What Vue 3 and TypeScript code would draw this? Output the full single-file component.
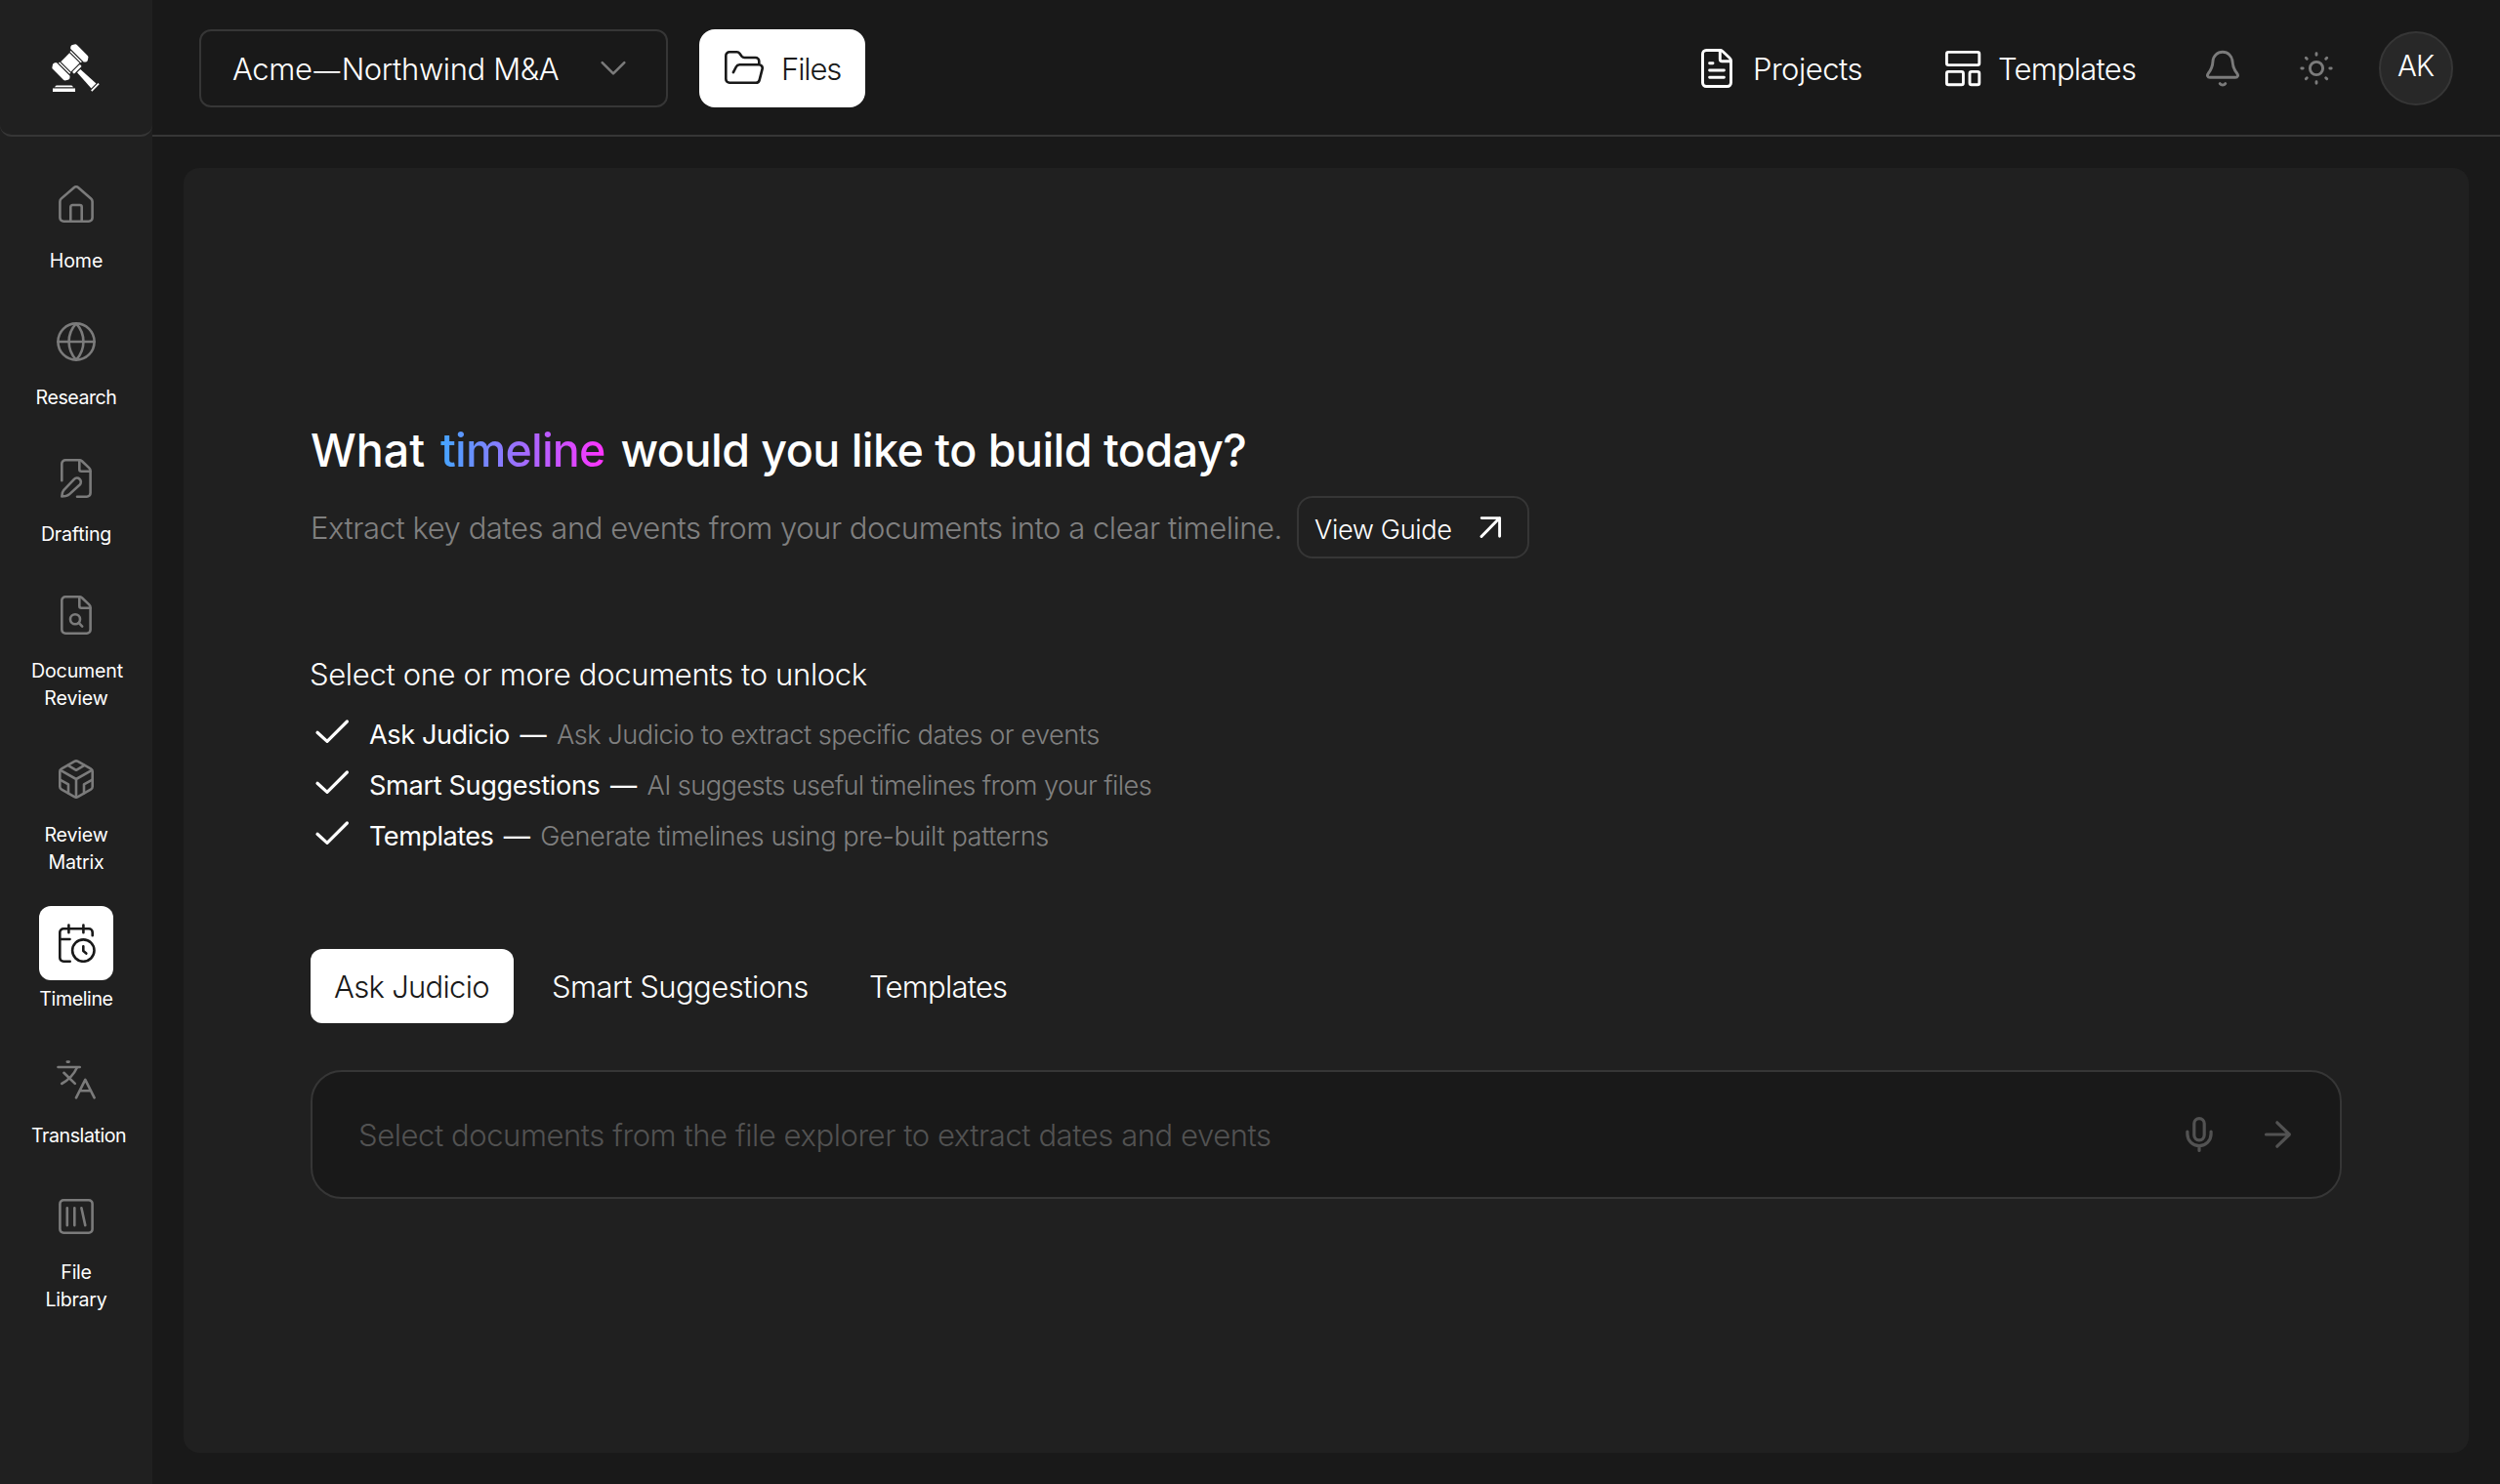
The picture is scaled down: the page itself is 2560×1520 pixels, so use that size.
<script setup lang="ts">
interface NavItem {
  label: string[]
  spacing: number
  active?: boolean
  paths: string[]
}

interface Feature {
  name: string
  text: string
  nameSpacing: number
  textSpacing: number
}

const nav: NavItem[] = [
  {
    label: ['Home'],
    spacing: -0.1,
    paths: [
      'M3.4 16.4c0-1.2.5-2.2 1.4-3L17.7 2.2a3.5 3.5 0 0 1 4.6 0l12.9 11.2c.9.8 1.4 1.8 1.4 3V33a3.7 3.7 0 0 1-3.7 3.7H7.1A3.7 3.7 0 0 1 3.4 33z',
      'M14.3 36.7V22a2 2 0 0 1 2-2h7.4a2 2 0 0 1 2 2v14.7',
    ],
  },
  {
    label: ['Research'],
    spacing: -0.46,
    paths: [
      'M1.4 20a18.6 18.6 0 1 0 37.2 0a18.6 18.6 0 1 0-37.2 0z',
      'M1.4 20h37.2',
      'M20 1.4c-9.9 10.6-9.9 26.6 0 37.2M20 1.4c9.9 10.6 9.9 26.6 0 37.2',
    ],
  },
  {
    label: ['Drafting'],
    spacing: -0.2,
    paths: [
      'M5.3 22.3V5a3.7 3.7 0 0 1 3.7-3.7h14.3c1 0 1.9.4 2.6 1l7.5 7.1c.8.7 1.2 1.7 1.2 2.8V35a3.7 3.7 0 0 1-3.7 3.7H21',
      'M23.3 1.5v9.3a2 2 0 0 0 2 2h9.1',
      'M5.3 38.5c.1-2.8.6-5 1.9-6.4L17.9 20.9a4 4 0 0 1 5.8 5.6L13.2 36.1c-1.8 1.6-4.6 2.3-7.9 2.4z',
    ],
  },
  {
    label: ['Document', 'Review'],
    spacing: -0.15,
    paths: [
      'M5.3 5A3.7 3.7 0 0 1 9 1.3h14.3c1 0 1.9.4 2.6 1l7.5 7.1c.8.7 1.2 1.7 1.2 2.8V35a3.7 3.7 0 0 1-3.7 3.7H9A3.7 3.7 0 0 1 5.3 35z',
      'M23.3 1.5v9.3a2 2 0 0 0 2 2h9.1',
      'M14 24.3a5 5 0 1 0 10 0a5 5 0 1 0-10 0z',
      'M22.6 27.9l3.6 3.7',
    ],
  },
  {
    label: ['Review', 'Matrix'],
    spacing: -0.2,
    paths: [
      'M18.2 1.9a3.6 3.6 0 0 1 3.6 0l13.1 7.4a3.5 3.5 0 0 1 1.8 3.1v15.2a3.5 3.5 0 0 1-1.8 3.1l-13.1 7.4a3.6 3.6 0 0 1-3.6 0L5.1 30.7a3.5 3.5 0 0 1-1.8-3.1V12.4a3.5 3.5 0 0 1 1.8-3.1z',
      'M3.9 10.9L20 20l16.1-9.1M20 20v18.4',
      'M11.6 5.8l8.4 5l8.4-5',
      'M3.4 20.6l8.6 4.8v8.9M36.6 20.6L28 25.4v8.9',
    ],
  },
  {
    label: ['Timeline'],
    spacing: -0.4,
    active: true,
    paths: [
      'M13.7 38.7H7A3.7 3.7 0 0 1 3.3 35V9A3.7 3.7 0 0 1 7 5.3h26A3.7 3.7 0 0 1 36.7 9v3.2',
      'M12.4 1.5v7.8M27.4 1.5v7.8M3.3 16h10.2',
      'M16.1 27.6a11.2 11.2 0 1 0 22.4 0a11.2 11.2 0 1 0-22.4 0z',
      'M27.3 23.2v4.9l3 2.5',
    ],
  },
  {
    label: ['Translation'],
    spacing: -0.45,
    paths: [
      'M10.8 1.6h1.8M1.5 7h22.2',
      'M21 7.3C17.6 14.6 12 20.3 5.2 24M7.4 12.8L18.8 23.9',
      'M20 38.4L29.3 19.8L38.6 38.4M23.5 31.2h11.6',
    ],
  },
  {
    label: ['File', 'Library'],
    spacing: -0.3,
    paths: [
      'M3.4 7A3.7 3.7 0 0 1 7.1 3.3h25.8A3.7 3.7 0 0 1 36.6 7v26a3.7 3.7 0 0 1-3.7 3.7H7.1A3.7 3.7 0 0 1 3.4 33z',
      'M10.8 11.2v17.9M18.3 11.2v17.9M25.4 11.2l3.9 17.9',
    ],
  },
]

const features: Feature[] = [
  { name: 'Ask Judicio', text: 'Ask Judicio to extract specific dates or events', nameSpacing: -0.45, textSpacing: -0.498 },
  { name: 'Smart Suggestions', text: 'AI suggests useful timelines from your files', nameSpacing: -0.38, textSpacing: -0.592 },
  { name: 'Templates', text: 'Generate timelines using pre-built patterns', nameSpacing: -0.57, textSpacing: -0.405 },
]
</script>

<template>
  <div class="app">
    <aside class="sidebar">
      <div class="brand">
        <svg class="gavel" viewBox="0 0 48 48" fill="#fff">
          <g transform="translate(17.9 17.9) rotate(45)">
            <path d="M-9.5-10h19c1.6-1.4 2.4-2.6 1.6-4.2l-1.7-2.6c-.5-.5-1-.7-1.7-.7H-7.7c-.7 0-1.2.2-1.7.7l-1.7 2.6c-.8 1.6 0 2.8 1.6 4.2z" />
            <path d="M-9.5 10h19c1.6 1.4 2.4 2.6 1.6 4.2l-1.7 2.6c-.5.5-1 .7-1.7.7H-7.7c-.7 0-1.2-.2-1.7-.7l-1.7-2.6c-.8-1.6 0-2.8 1.6-4.2z" />
            <rect x="-8" y="-8.9" width="16" height="1.5" />
            <rect x="-8" y="7.4" width="16" height="1.5" />
            <rect x="-7.3" y="-6.3" width="14.6" height="12.6" />
            <rect x="8.4" y="-5.6" width="2.8" height="11.2" rx="1" />
            <path d="M12.4-2.4L34-3.5v7L12.4 2.4z" />
            <rect x="35.2" y="-5.2" width="1.7" height="10.4" />
          </g>
          <path d="M0 44.6h23v3.4H0zM3.6 41.6h15.8l1.8 1.7H1.8z" />
        </svg>
      </div>
      <nav class="nav">
        <a v-for="item in nav" :key="item.label.join(' ')" class="nav-item" :class="{ active: item.active }">
          <span class="nav-icon">
            <svg class="icon" viewBox="0 0 40 40">
              <path v-for="d in item.paths" :key="d" :d="d" />
            </svg>
          </span>
          <span class="nav-label" :style="{ letterSpacing: item.spacing + 'px' }">
            <span v-for="line in item.label" :key="line">{{ line }}</span>
          </span>
        </a>
      </nav>
    </aside>

    <div class="page">
      <header class="header">
        <button class="matter">
          <span class="t name">Acme<span class="dash">—</span>Northwind M&amp;A</span>
          <svg class="icon dim" viewBox="0 0 40 40"><path d="M8.7 14.1L20 25.3L31.3 14.1" /></svg>
        </button>
        <button class="files">
          <svg class="icon" viewBox="0 0 40 40">
            <path d="M8.9 24.2l2.9-5.7a4 4 0 0 1 3.5-2.2h19.9a3.5 3.5 0 0 1 3.4 4.4l-2.9 11.1a3.8 3.8 0 0 1-3.7 2.9H5A3.7 3.7 0 0 1 1.3 31V7A3.7 3.7 0 0 1 5 3.3h7.6c1.2 0 2.1.5 2.8 1.4l2.2 3c.7.9 1.6 1.3 2.7 1.3h11.3a3.7 3.7 0 0 1 3.7 3.7v3.4" />
          </svg>
          <span class="t">Files</span>
        </button>
        <div class="tools">
          <a class="tool projects">
            <svg class="icon bold" viewBox="0 0 40 40">
              <path d="M5.5 5.2a3.7 3.7 0 0 1 3.7-3.7h14.1c1 0 1.9.4 2.6 1l7.4 7c.8.7 1.2 1.7 1.2 2.8v22.5a3.7 3.7 0 0 1-3.7 3.7H9.2a3.7 3.7 0 0 1-3.7-3.7z" />
              <path d="M23.3 1.7v9.1a2 2 0 0 0 2 2h9" />
              <path d="M12.6 14.7h3.4M12.6 22h14.8M12.6 29.3h14.8" />
            </svg>
            <span class="t">Projects</span>
          </a>
          <a class="tool templates">
            <svg class="icon bold" viewBox="0 0 40 40">
              <rect x="3.4" y="3.4" width="33.4" height="13.2" rx="1.8" />
              <rect x="3.4" y="23.4" width="17" height="13.3" rx="1.8" />
              <rect x="27" y="23.4" width="9.8" height="13.3" rx="1.8" />
            </svg>
            <span class="t">Templates</span>
          </a>
          <svg class="icon bold dim bell" viewBox="0 0 40 40">
            <path d="M20 3.2c-5.5 0-9.7 4.1-10 9.5-.3 5.4-1.3 8.4-4.8 12.6-1.5 1.9-.6 4 1.7 4h26.2c2.3 0 3.2-2.1 1.7-4-3.5-4.2-4.5-7.2-4.8-12.6-.3-5.4-4.5-9.5-10-9.5z" />
            <path d="M17.2 35.6c.7.9 1.7 1.4 2.8 1.4s2.1-.5 2.8-1.4" />
          </svg>
          <svg class="icon bold dim sun" viewBox="0 0 40 40">
            <circle cx="20" cy="20" r="6.6" />
            <path d="M20 4.8v1.4M20 33.8v1.4M4.8 20h1.4M33.8 20h1.4M9.3 9.3l1 1M29.7 29.7l1 1M9.3 30.7l1-1M29.7 10.3l1-1" />
          </svg>
          <div class="avatar">AK</div>
        </div>
      </header>

      <main class="panel">
        <h1 class="title">
          <span class="what">What</span>
          <span class="accent">timeline</span>
          <span class="rest">would you like to build today?</span>
        </h1>
        <div class="lead">
          <p class="t">Extract key dates and events from your documents into a clear timeline.</p>
          <button class="guide">
            <span>View Guide</span>
            <svg class="icon bold" viewBox="0 0 40 40"><path d="M11 29.5L29.6 10.6M11.2 10.6h18.4v18.6" /></svg>
          </button>
        </div>

        <p class="unlock t">Select one or more documents to unlock</p>
        <ul class="features">
          <li v-for="f in features" :key="f.name">
            <svg class="icon heavy check" viewBox="0 0 40 40"><path d="M7 18.3l10 9.1L37.4 7" /></svg>
            <span class="f-name" :style="{ letterSpacing: f.nameSpacing + 'px' }">{{ f.name }}</span>
            <span class="f-dash">—</span>
            <span class="f-text" :style="{ letterSpacing: f.textSpacing + 'px' }">{{ f.text }}</span>
          </li>
        </ul>

        <div class="tabs">
          <button class="tab ask selected"><span class="t">Ask Judicio</span></button>
          <button class="tab smart"><span class="t">Smart Suggestions</span></button>
          <button class="tab tpl"><span class="t">Templates</span></button>
        </div>

        <div class="prompt">
          <span class="t placeholder">Select documents from the file explorer to extract dates and events</span>
          <svg class="icon heavy" viewBox="0 0 40 40">
            <rect x="14.8" y="3.6" width="10.4" height="22.2" rx="5.2" />
            <path d="M7.9 17v2.6a12.1 12.1 0 0 0 24.2 0V17M20 31.9v4.6" />
          </svg>
          <svg class="icon heavy" viewBox="0 0 40 40"><path d="M8.5 20h23.8M19.8 7.8L32.4 20L19.8 32.2" /></svg>
        </div>
      </main>
    </div>
  </div>
</template>

<style>
body {
  background: #191919;
}
</style>

<style scoped>
.app {
  display: flex;
  width: 2560px;
  height: 1520px;
  overflow: hidden;
  background: #191919;
  color: #fff;
  font-family: Inter, "Liberation Sans", sans-serif;
  font-weight: 300;
  font-size: 31px;
  line-height: 40px;
}
.app * {
  box-sizing: border-box;
}
button {
  margin: 0;
  padding: 0;
  border: 0;
  background: none;
  color: inherit;
  font: inherit;
}
h1,
p,
ul {
  margin: 0;
  padding: 0;
  list-style: none;
}
.t {
  padding-top: 2px;
  white-space: nowrap;
}
.icon {
  display: block;
  flex: none;
  width: 40px;
  height: 40px;
  fill: none;
  stroke: currentColor;
  stroke-width: 2.6;
  stroke-linecap: round;
  stroke-linejoin: round;
}
.icon.bold {
  stroke-width: 2.9;
}
.icon.heavy {
  stroke-width: 3.2;
}
.icon.dim {
  color: #7b7b7b;
}

/* sidebar */
.sidebar {
  flex: none;
  width: 156px;
  background: #202020;
}
.brand {
  height: 140px;
  padding: 46px 0 0 54px;
  border-bottom: 2px solid #363636;
  border-radius: 0 0 12px 12px;
}
.gavel {
  display: block;
  width: 48px;
  height: 48px;
  overflow: visible;
}
.nav {
  display: flex;
  flex-direction: column;
  align-items: center;
  gap: 31px;
  padding-top: 32px;
}
.nav-item {
  display: flex;
  flex-direction: column;
  align-items: center;
  gap: 5px;
  width: 92px;
}
.nav-icon {
  display: flex;
  align-items: center;
  justify-content: center;
  width: 76px;
  height: 76px;
  border-radius: 12px;
  color: #7b7b7b;
}
.active .nav-icon {
  background: #fff;
  color: #191919;
}
.nav-label {
  width: 92px;
  font-size: 19.6px;
  font-weight: 400;
  line-height: 28px;
  text-align: center;
}
.nav-label span {
  display: block;
}

/* header */
.page {
  flex: 1;
  display: flex;
  flex-direction: column;
}
.header {
  display: flex;
  align-items: center;
  height: 140px;
  padding: 0 48px;
  border-bottom: 2px solid #363636;
}
.matter {
  display: flex;
  align-items: center;
  justify-content: space-between;
  width: 480px;
  height: 80px;
  margin-top: 2px;
  padding: 0 34px 0 32px;
  border: 2px solid #363636;
  border-radius: 12px;
}
.name {
  letter-spacing: -0.36px;
}
.dash {
  display: inline-block;
  width: 30px;
  font-size: 27px;
  line-height: 30px;
  text-align: center;
}
.files {
  display: flex;
  align-items: center;
  gap: 18px;
  width: 170px;
  height: 80px;
  margin: 2px 0 0 32px;
  padding-left: 26px;
  border-radius: 16px;
  background: #fff;
  color: #191919;
  letter-spacing: -1.1px;
}
.tools {
  display: flex;
  align-items: center;
  margin: 2px 0 0 auto;
}
.tool {
  display: flex;
  align-items: center;
}
.projects {
  gap: 17px;
  width: 172px;
  margin-right: 80px;
  letter-spacing: -0.51px;
}
.templates {
  gap: 16px;
  width: 200px;
  margin-right: 66px;
  letter-spacing: -0.78px;
}
.bell {
  margin-right: 56px;
}
.sun {
  margin-right: 44px;
}
.avatar {
  width: 76px;
  height: 76px;
  border: 2px solid #363636;
  border-radius: 50%;
  background: #282828;
  padding-right: 1px;
  font-size: 29.5px;
  letter-spacing: -0.9px;
  line-height: 66px;
  text-align: center;
}

/* panel */
.panel {
  flex: none;
  width: 2340px;
  height: 1316px;
  margin: 32px;
  padding: 259px 130px 0;
  border-radius: 16px;
  background: #202020;
}
.title {
  display: flex;
  font-size: 46.6px;
  font-weight: 500;
  line-height: 60px;
  white-space: nowrap;
}
.what {
  width: 133px;
}
.accent {
  margin-right: 16px;
  background: linear-gradient(90deg, #44a6ff, #ff32ff);
  -webkit-background-clip: text;
  background-clip: text;
  color: transparent;
  letter-spacing: -0.84px;
}
.rest {
  letter-spacing: -0.535px;
}
.lead {
  display: flex;
  align-items: center;
  height: 64px;
  margin-top: 17px;
}
.lead p {
  width: 1010px;
  color: #808080;
  letter-spacing: -0.455px;
}
.guide {
  display: flex;
  align-items: center;
  justify-content: space-between;
  width: 238px;
  height: 64px;
  padding: 0 18px 0 16px;
  border: 2px solid #363636;
  border-radius: 16px;
  font-size: 27.2px;
  letter-spacing: -0.38px;
}
.guide span {
  padding-top: 6px;
}
.unlock {
  margin: 97px 0 0 -1px;
  letter-spacing: -0.34px;
}
.features {
  margin-top: 15px;
  font-size: 27.2px;
}
.features li {
  display: flex;
  align-items: center;
  height: 52px;
  white-space: nowrap;
}
.features span {
  padding-top: 1px;
}
.f-name {
  margin-left: 20px;
  font-weight: 400;
}
.f-dash {
  width: 48px;
  font-weight: 400;
  text-align: center;
}
.f-text {
  color: #808080;
}
.tabs {
  display: flex;
  gap: 16px;
  margin-top: 90px;
}
.tab {
  height: 76px;
  padding-left: 24px;
  border-radius: 12px;
  text-align: left;
}
.tab .t {
  display: block;
}
.ask {
  width: 208px;
  letter-spacing: -0.7px;
}
.smart {
  width: 308px;
  padding-left: 23px;
  letter-spacing: -0.52px;
}
.tpl {
  width: 188px;
  letter-spacing: -0.76px;
}
.selected {
  background: #fff;
  color: #191919;
}
.prompt {
  display: flex;
  align-items: center;
  gap: 40px;
  height: 132px;
  margin-top: 48px;
  padding: 0 44px 0 47px;
  border: 2px solid #363636;
  border-radius: 32px;
  background: #191919;
  color: #525252;
}
.placeholder {
  margin-right: auto;
  letter-spacing: -0.435px;
}
</style>
